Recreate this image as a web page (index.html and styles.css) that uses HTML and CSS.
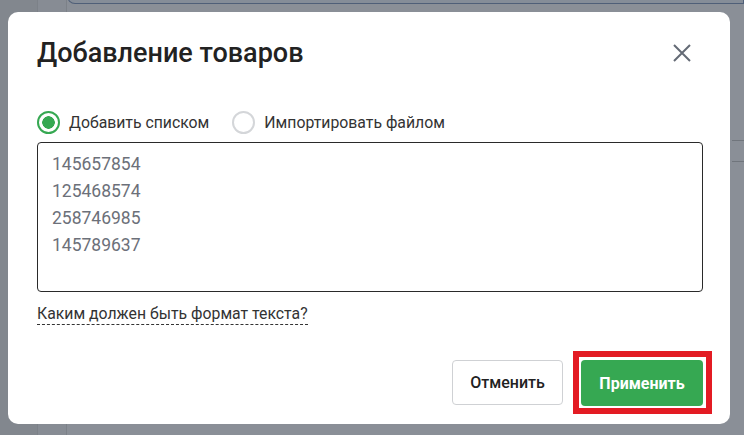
FILE: index.html
```html
<html>
	<head>
		<title>Добавление товаров</title>
		<link rel="stylesheet" href="styles.css">
	</head>
	<body>
		<div class="page">
			<div class="side"></div>
			<div class="gutter"></div>
			<div class="main">
				<div class="topbox"></div>
				<div class="rows">
					<div class="row"></div>
					<div class="row"></div>
				</div>
			</div>
		</div>

		<div class="modal">
			<div class="head">
				<h1 class="title">Добавление товаров</h1>
				<button class="close" aria-label="Закрыть">
					<svg width="18" height="18" viewBox="0 0 18 18">
						<path d="M1 1 L17 17 M17 1 L1 17" stroke="#646a75" stroke-width="2" fill="none" />
					</svg>
				</button>
			</div>

			<div class="modes">
				<label class="radio on"><span class="dot"></span>Добавить списком</label>
				<label class="radio"><span class="dot"></span>Импортировать файлом</label>
			</div>

			<div class="list">
				<div>145657854</div>
				<div>125468574</div>
				<div>258746985</div>
				<div>145789637</div>
			</div>

			<div class="help"><span class="hint">Каким должен быть формат текста?</span></div>

			<div class="foot">
				<button class="btn cancel">Отменить</button>
				<div class="mark">
					<button class="btn apply">Применить</button>
				</div>
			</div>
		</div>
	</body>
</html>
```

FILE: styles.css
```css
body { margin:0; background:#8a8f97; font-family:Roboto, "Noto Sans", sans-serif; overflow:hidden; }

.page { display:flex; height:435px; }
.side { width:37px; background:#82878e; }
.gutter { width:28px; border-left:1px solid #7c8188; border-right:1px solid #7c8188; background:#878c94; }
.main { flex:1; }
.topbox { height:7px; margin-top:-4px; border:1px solid #4f5f78; border-top:none; border-radius:0 0 0 10px; background:#858d98; }
.rows { margin-top:136px; margin-left:665px; }
.row { height:20px; border-top:1px solid #70757c; }

.modal {
	position:absolute; left:8px; top:12px;
	width:722px; height:412px;
	box-sizing:border-box;
	display:flex; flex-direction:column;
	background:#fff;
	border-radius:10px;
	padding:24px 27px 10px 29px;
}

.head { display:flex; justify-content:space-between; align-items:center; height:34px; }
.title { margin:0; font-size:27px; font-weight:500; color:#222; }
.close { border:none; background:none; padding:0; margin-right:12px; display:flex; }

.modes { display:flex; gap:23px; margin-top:40px; height:24px; align-items:center; }
.radio { display:flex; align-items:center; gap:9px; font-size:15.8px; color:#333; }
.dot { width:19px; height:19px; border-radius:50%; border:2px solid #d4d6d9; box-sizing:content-box; }
.radio.on .dot { border-color:#36a852; background:radial-gradient(circle, #36a852 0 6px, #fff 6.5px); }

.list {
	margin-top:8px;
	height:150px; box-sizing:border-box;
	border:1px solid #2a2a2a; border-radius:4px;
	padding:8px 14px;
	font-size:17.5px; line-height:27px; color:#6c7079;
}

.help { margin-top:12px; font-size:15.8px; color:#333; }
.hint { border-bottom:1px dashed #333; padding-bottom:1px; }

.foot { display:flex; justify-content:flex-end; align-items:center; gap:10px; margin-top:auto; margin-right:-9px; }
.btn { font-family:inherit; font-size:16px; border-radius:4px; cursor:pointer; }
.cancel { width:111px; height:45px; background:#fff; border:1px solid #cfd1d4; color:#222; font-weight:500; }
.mark { border:6px solid #e31b23; padding:3px 3px 2px 2px; display:flex; }
.apply { width:122px; height:46px; background:#36a852; border:none; color:#fff; font-weight:700; }
```
